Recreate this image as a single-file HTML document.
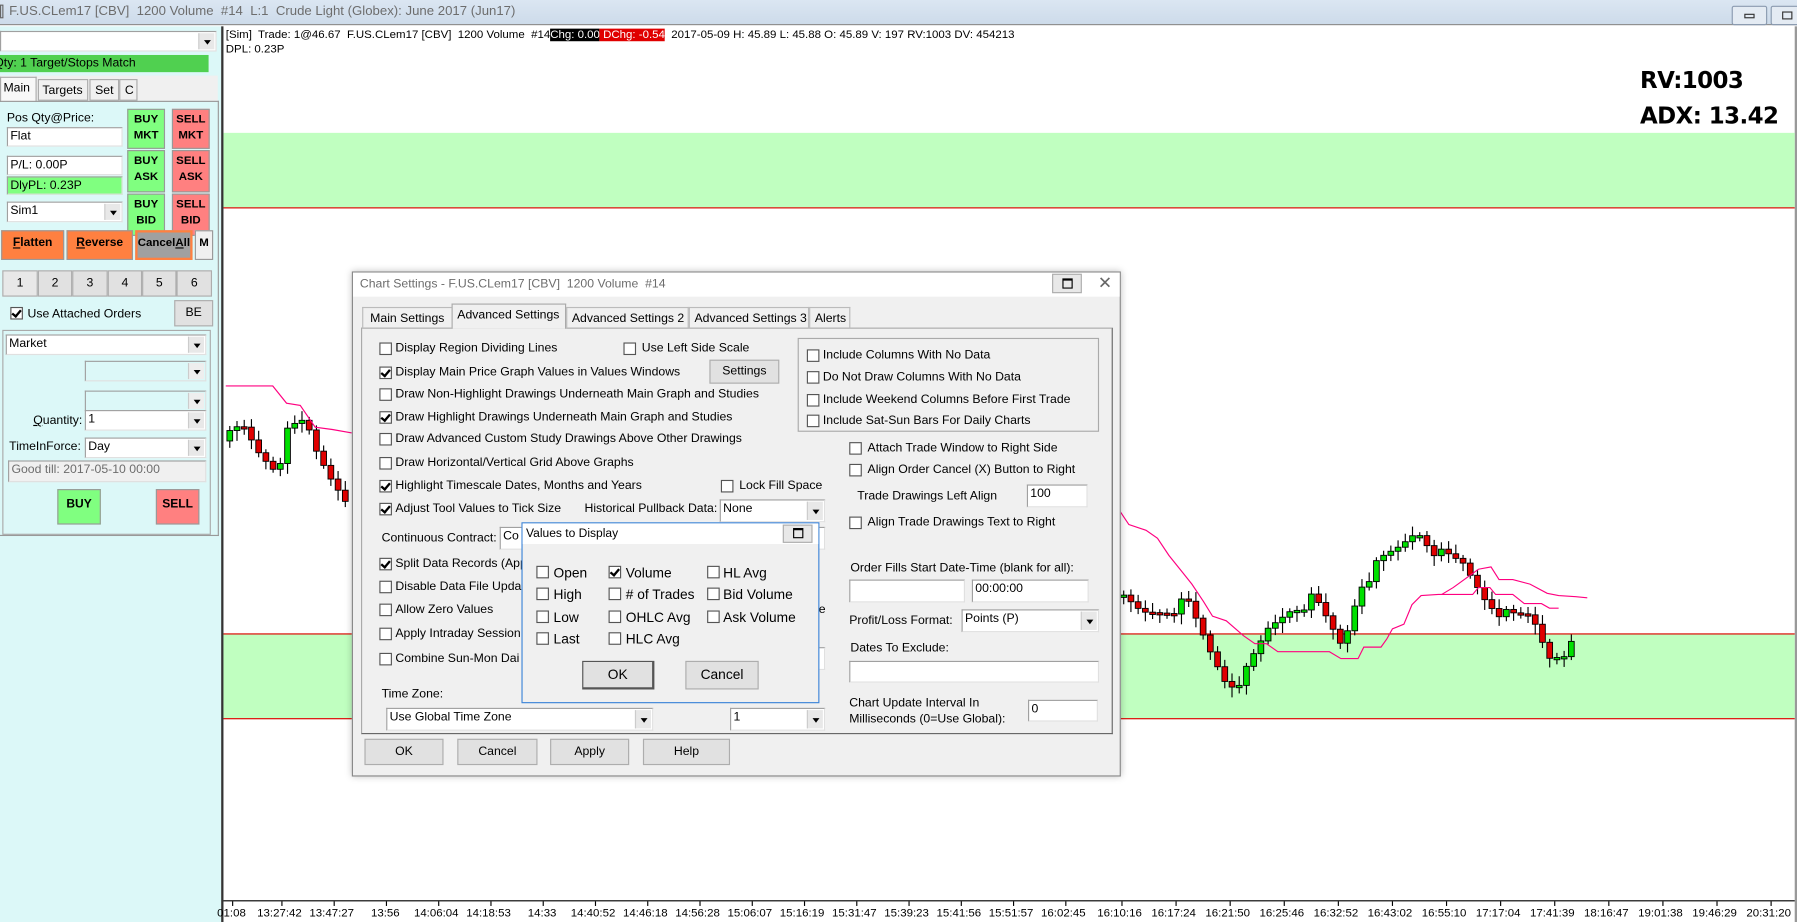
<!DOCTYPE html>
<html><head><meta charset="utf-8">
<style>
*{box-sizing:border-box;margin:0;padding:0}
html,body{width:1797px;height:922px;overflow:hidden;background:#fff}
#w{position:absolute;left:0;top:0;width:1568px;height:805px;transform:scale(1.14605,1.14534);transform-origin:0 0;font-family:"Liberation Sans",Arial,sans-serif;font-size:10.7px;color:#000}
.a{position:absolute;white-space:nowrap}
.box{position:absolute;background:#fff;border:1px solid #a0a0a0;border-right-color:#e0e0e0;border-bottom-color:#e0e0e0;padding:1px 2px;white-space:nowrap}
.btn{position:absolute;background:#e1e1e1;border:1px solid #adadad;text-align:center;white-space:nowrap}
.cb{position:absolute;width:11px;height:11px;background:#fff;border:1px solid #555}
.cb.k::after{content:"";position:absolute;left:2px;top:0px;width:3px;height:6px;border:solid #000;border-width:0 2px 2px 0;transform:rotate(40deg)}
.dd{position:absolute;right:1px;top:1px;bottom:1px;width:14px;background:#e8e8e8;border-left:1px solid #ccc}
.dd::after{content:"";position:absolute;left:4px;top:50%;margin-top:-1px;border:3px solid transparent;border-top:4px solid #000}
.gb{position:absolute;font-weight:bold;text-align:center;border:1px solid #999;font-size:10px;line-height:14px;padding-top:2px}
</style></head><body><div id="w">
<div class="a" style="left:0;top:0;width:1568px;height:22px;background:linear-gradient(#dbe6f2,#cddbea);border-bottom:1px solid #8a8a8a"></div>
<div class="a" style="left:0;top:4px;width:3px;height:12px;border:1px solid #666"></div>
<div class="a" style="left:8px;top:4px;color:#6d6d6d;font-size:11.5px">F.US.CLem17 [CBV]&nbsp; 1200 Volume&nbsp; #14&nbsp; L:1&nbsp; Crude Light (Globex): June 2017 (Jun17)</div>
<div class="a" style="left:1511px;top:5px;width:31px;height:17px;border:1px solid #8b9bb0;border-radius:2px;background:#e4ebf3"><div class="a" style="left:10px;top:6px;width:9px;height:4px;border:1px solid #333"></div></div>
<div class="a" style="left:1545px;top:5px;width:30px;height:17px;border:1px solid #8b9bb0;border-radius:2px;background:#e4ebf3"><div class="a" style="left:9px;top:4px;width:9px;height:7px;border:1px solid #333"></div></div>

<div class="a" style="left:0;top:23px;width:193px;height:782px;background:#dcf8f8"></div>
<div class="a" style="left:193px;top:23px;width:2px;height:782px;background:#333"></div>
<div class="box" style="left:0;top:27px;width:189px;height:18px"><div class="dd"></div></div>
<div class="a" style="left:0;top:48px;width:182px;height:15px;background:#50d050;overflow:hidden"><div class="a" style="left:-5px;top:1px">Qty: 1 Target/Stops Match</div></div>
<div class="a" style="left:0;top:66px;width:190px;height:22px;background:#f0f0f0"></div>
<div class="a" style="left:0;top:67px;width:32px;height:22px;background:#f8f8f8;border:1px solid #aaa;border-bottom:none;padding:3px 2px">Main</div>
<div class="a" style="left:33px;top:69px;width:44px;height:19px;background:#f0f0f0;border:1px solid #aaa;padding:3px 3px">Targets</div>
<div class="a" style="left:78px;top:69px;width:26px;height:19px;background:#f0f0f0;border:1px solid #aaa;padding:3px 4px">Set</div>
<div class="a" style="left:104px;top:69px;width:16px;height:19px;background:#f0f0f0;border:1px solid #aaa;padding:3px 4px">C</div>
<div class="a" style="left:0;top:88px;width:191px;height:380px;border:1px solid #999;border-left:none"></div>
<div class="a" style="left:6px;top:97px">Pos Qty@Price:</div>
<div class="box" style="left:6px;top:111px;width:101px;height:17px">Flat</div>
<div class="box" style="left:6px;top:136px;width:101px;height:17px">P/L: 0.00P</div>
<div class="box" style="left:6px;top:154px;width:101px;height:16px;background:#80ff80">DlyPL: 0.23P</div>
<div class="box" style="left:6px;top:176px;width:101px;height:18px">Sim1<div class="dd"></div></div>
<div class="gb" style="left:111px;top:95px;width:33px;height:35px;background:#80ff80">BUY<br>MKT</div>
<div class="gb" style="left:150px;top:95px;width:33px;height:35px;background:#ff8080">SELL<br>MKT</div>
<div class="gb" style="left:111px;top:131px;width:33px;height:37px;background:#80ff80">BUY<br>ASK</div>
<div class="gb" style="left:150px;top:131px;width:33px;height:37px;background:#ff8080">SELL<br>ASK</div>
<div class="gb" style="left:111px;top:169px;width:33px;height:37px;background:#80ff80">BUY<br>BID</div>
<div class="gb" style="left:150px;top:169px;width:33px;height:37px;background:#ff8080">SELL<br>BID</div>
<div class="gb" style="left:1px;top:201px;width:55px;height:26px;background:#ff8040;line-height:20px;padding:0;font-size:10.5px"><u>F</u>latten</div>
<div class="gb" style="left:58px;top:201px;width:58px;height:26px;background:#ff8040;line-height:20px;padding:0;font-size:10.5px"><u>R</u>everse</div>
<div class="gb" style="left:118px;top:201px;width:50px;height:26px;background:#a0a0a0;line-height:20px;padding:0;font-size:10px;border:2px solid #ff8040">Cancel<u>A</u>ll</div>
<div class="gb" style="left:170px;top:201px;width:16px;height:26px;background:#f0f0f0;line-height:22px;padding:0;font-size:10px">M</div>
<div class="btn" style="left:2px;top:236px;width:31px;height:23px;line-height:21px;background:#e8e8e8">1</div>
<div class="btn" style="left:33px;top:236px;width:30px;height:23px;line-height:21px">2</div>
<div class="btn" style="left:63px;top:236px;width:31px;height:23px;line-height:21px">3</div>
<div class="btn" style="left:94px;top:236px;width:30px;height:23px;line-height:21px">4</div>
<div class="btn" style="left:124px;top:236px;width:30px;height:23px;line-height:21px">5</div>
<div class="btn" style="left:154px;top:236px;width:31px;height:23px;line-height:21px">6</div>
<div class="cb k" style="left:9px;top:268px"></div>
<div class="a" style="left:24px;top:268px">Use Attached Orders</div>
<div class="btn" style="left:152px;top:262px;width:34px;height:23px;line-height:21px">BE</div>
<div class="a" style="left:2px;top:288px;width:182px;height:179px;border:1px solid #aaa"></div>
<div class="box" style="left:5px;top:292px;width:175px;height:18px">Market<div class="dd"></div></div>
<div class="box" style="left:74px;top:315px;width:106px;height:18px;background:#dcf8f8"><div class="dd" style="background:#eee"></div></div>
<div class="box" style="left:74px;top:341px;width:106px;height:18px;background:#dcf8f8"><div class="dd" style="background:#eee"></div></div>
<div class="a" style="left:29px;top:361px"><u>Q</u>uantity:</div>
<div class="box" style="left:74px;top:358px;width:106px;height:18px">1<div class="dd"></div></div>
<div class="a" style="left:8px;top:384px">TimeInForce:</div>
<div class="box" style="left:74px;top:382px;width:106px;height:18px">Day<div class="dd"></div></div>
<div class="box" style="left:7px;top:402px;width:173px;height:19px;background:#f0f0f0;color:#6d6d6d">Good till: 2017-05-10 00:00</div>
<div class="gb" style="left:50px;top:427px;width:38px;height:31px;background:#80ff80;line-height:25px;padding:0;font-size:10.5px">BUY</div>
<div class="gb" style="left:136px;top:427px;width:38px;height:31px;background:#ff8080;line-height:25px;padding:0;font-size:10.5px">SELL</div>

<div class="a" style="left:195px;top:23px;width:1371px;height:764px;background:#fff"></div>
<div class="a" style="left:1566px;top:23px;width:2px;height:782px;background:#999"></div>
<div class="a" style="left:195px;top:116px;width:1371px;height:66px;background:#c0ffc0;border-bottom:1px solid #e00000"></div>
<div class="a" style="left:195px;top:553px;width:1371px;height:75px;background:#c0ffc0;border-top:1px solid #e00000;border-bottom:1px solid #e00000"></div>
<svg class="a" id="cs" style="left:0;top:0" width="1568" height="805"></svg>
<div class="a" style="left:197px;top:25px;font-size:10px">[Sim]&nbsp; Trade: 1@46.67&nbsp; F.US.CLem17 [CBV]&nbsp; 1200 Volume&nbsp; #14<span style="background:#000;color:#fff">Chg: 0.00</span><span style="background:#e00000;color:#fff"> DChg: -0.54</span>&nbsp; 2017-05-09 H: 45.89 L: 45.88 O: 45.89 V: 197 RV:1003 DV: 454213</div>
<div class="a" style="left:197px;top:38px;font-size:10px">DPL: 0.23P</div>
<div class="a" style="left:1431px;top:58px;font-size:20px;font-weight:bold;font-family:'DejaVu Sans',sans-serif;letter-spacing:-0.5px">RV:1003</div>
<div class="a" style="left:1431px;top:89px;font-size:20px;font-weight:bold;font-family:'DejaVu Sans',sans-serif;letter-spacing:-0.5px">ADX: 13.42</div>
<div class="a" style="left:195px;top:786px;width:1371px;height:1px;background:#000"></div>
<div id="tl"></div>

<div class="a" style="left:307px;top:237px;width:671px;height:441px;background:#f0f0f0;border:1px solid #888;box-shadow:0 0 6px rgba(0,0,0,.25)"></div>
<div class="a" style="left:308px;top:238px;width:669px;height:21px;background:#fff"></div>
<div class="a" style="left:314px;top:242px;color:#6d6d6d">Chart Settings - F.US.CLem17 [CBV]&nbsp; 1200 Volume&nbsp; #14</div>
<div class="btn" style="left:918px;top:239px;width:26px;height:17px;background:#e8e8e8"><div class="a" style="left:8px;top:3px;width:9px;height:9px;border:1px solid #000;border-top-width:2px"></div></div>
<div class="a" style="left:958px;top:238px;font-size:15px;color:#666">✕</div>
<div class="a" style="left:315px;top:286px;width:656px;height:355px;border:1px solid #aaa;border-right-color:#666;border-bottom-color:#666"></div>
<div class="a" style="left:316px;top:268px;width:79px;height:19px;border:1px solid #bbb;border-bottom:none;padding:3px 6px">Main Settings</div>
<div class="a" style="left:394px;top:265px;width:100px;height:22px;border:1px solid #aaa;border-bottom:none;background:#f0f0f0;padding:3px 4px">Advanced Settings</div>
<div class="a" style="left:494px;top:268px;width:107px;height:19px;border:1px solid #bbb;border-bottom:none;padding:3px 4px">Advanced Settings 2</div>
<div class="a" style="left:601px;top:268px;width:105px;height:19px;border:1px solid #bbb;border-bottom:none;padding:3px 4px">Advanced Settings 3</div>
<div class="a" style="left:706px;top:268px;width:36px;height:19px;border:1px solid #bbb;border-bottom:none;padding:3px 4px">Alerts</div>

<div class="cb" style="left:331px;top:299px"></div><div class="a" style="left:345px;top:298px">Display Region Dividing Lines</div>
<div class="cb" style="left:544px;top:299px"></div><div class="a" style="left:560px;top:298px">Use Left Side Scale</div>
<div class="cb k" style="left:331px;top:320px"></div><div class="a" style="left:345px;top:319px">Display Main Price Graph Values in Values Windows</div>
<div class="btn" style="left:619px;top:314px;width:61px;height:21px;line-height:19px">Settings</div>
<div class="cb" style="left:331px;top:339px"></div><div class="a" style="left:345px;top:338px">Draw Non-Highlight Drawings Underneath Main Graph and Studies</div>
<div class="cb k" style="left:331px;top:359px"></div><div class="a" style="left:345px;top:358px">Draw Highlight Drawings Underneath Main Graph and Studies</div>
<div class="cb" style="left:331px;top:378px"></div><div class="a" style="left:345px;top:377px">Draw Advanced Custom Study Drawings Above Other Drawings</div>
<div class="cb" style="left:331px;top:399px"></div><div class="a" style="left:345px;top:398px">Draw Horizontal/Vertical Grid Above Graphs</div>
<div class="cb k" style="left:331px;top:419px"></div><div class="a" style="left:345px;top:418px">Highlight Timescale Dates, Months and Years</div>
<div class="cb" style="left:629px;top:419px"></div><div class="a" style="left:645px;top:418px">Lock Fill Space</div>
<div class="cb k" style="left:331px;top:439px"></div><div class="a" style="left:345px;top:438px">Adjust Tool Values to Tick Size</div>
<div class="a" style="left:510px;top:438px">Historical Pullback Data:</div>
<div class="box" style="left:628px;top:436px;width:92px;height:20px">None<div class="dd"></div></div>
<div class="a" style="left:333px;top:464px">Continuous Contract:</div>
<div class="box" style="left:436px;top:460px;width:284px;height:20px">Co</div>
<div class="cb k" style="left:331px;top:487px"></div><div class="a" style="left:345px;top:486px">Split Data Records (App</div>
<div class="cb" style="left:331px;top:507px"></div><div class="a" style="left:345px;top:506px">Disable Data File Upda</div>
<div class="cb" style="left:331px;top:527px"></div><div class="a" style="left:345px;top:526px">Allow Zero Values</div>
<div class="cb" style="left:331px;top:548px"></div><div class="a" style="left:345px;top:547px">Apply Intraday Session</div>
<div class="cb" style="left:331px;top:570px"></div><div class="a" style="left:345px;top:569px">Combine Sun-Mon Dai</div>
<div class="a" style="left:712px;top:526px">le</div>
<div class="box" style="left:600px;top:565px;width:120px;height:20px"></div>
<div class="a" style="left:333px;top:600px">Time Zone:</div>
<div class="box" style="left:337px;top:618px;width:233px;height:20px">Use Global Time Zone<div class="dd"></div></div>
<div class="box" style="left:637px;top:618px;width:83px;height:20px">1<div class="dd"></div></div>

<div class="a" style="left:696px;top:295px;width:263px;height:82px;border:1px solid #aaa"></div>
<div class="cb" style="left:704px;top:305px"></div><div class="a" style="left:718px;top:304px">Include Columns With No Data</div>
<div class="cb" style="left:704px;top:324px"></div><div class="a" style="left:718px;top:323px">Do Not Draw Columns With No Data</div>
<div class="cb" style="left:704px;top:344px"></div><div class="a" style="left:718px;top:343px">Include Weekend Columns Before First Trade</div>
<div class="cb" style="left:704px;top:362px"></div><div class="a" style="left:718px;top:361px">Include Sat-Sun Bars For Daily Charts</div>
<div class="cb" style="left:741px;top:386px"></div><div class="a" style="left:757px;top:385px">Attach Trade Window to Right Side</div>
<div class="cb" style="left:741px;top:405px"></div><div class="a" style="left:757px;top:404px">Align Order Cancel (X) Button to Right</div>
<div class="a" style="left:748px;top:427px">Trade Drawings Left Align</div>
<div class="box" style="left:896px;top:423px;width:53px;height:20px">100</div>
<div class="cb" style="left:741px;top:451px"></div><div class="a" style="left:757px;top:450px">Align Trade Drawings Text to Right</div>
<div class="a" style="left:742px;top:490px">Order Fills Start Date-Time (blank for all):</div>
<div class="box" style="left:741px;top:506px;width:101px;height:20px"></div>
<div class="box" style="left:848px;top:506px;width:102px;height:20px">00:00:00</div>
<div class="a" style="left:741px;top:536px">Profit/Loss Format:</div>
<div class="box" style="left:839px;top:532px;width:120px;height:20px">Points (P)<div class="dd"></div></div>
<div class="a" style="left:742px;top:560px">Dates To Exclude:</div>
<div class="box" style="left:741px;top:577px;width:218px;height:19px"></div>
<div class="a" style="left:741px;top:607px;line-height:14px">Chart Update Interval In<br>Milliseconds (0=Use Global):</div>
<div class="box" style="left:897px;top:611px;width:61px;height:19px">0</div>
<div class="btn" style="left:318px;top:645px;width:69px;height:23px;line-height:21px">OK</div>
<div class="btn" style="left:399px;top:645px;width:70px;height:23px;line-height:21px">Cancel</div>
<div class="btn" style="left:480px;top:645px;width:69px;height:23px;line-height:21px">Apply</div>
<div class="btn" style="left:561px;top:645px;width:76px;height:23px;line-height:21px">Help</div>

<div class="a" style="left:455px;top:456px;width:260px;height:158px;background:#f0f0f0;border:1px solid #3c84d8"></div>
<div class="a" style="left:456px;top:457px;width:258px;height:18px;background:#fff"></div>
<div class="a" style="left:459px;top:460px;font-size:10.5px">Values to Display</div>
<div class="btn" style="left:683px;top:458px;width:26px;height:16px;background:#e8e8e8"><div class="a" style="left:8px;top:2px;width:9px;height:9px;border:1px solid #000;border-top-width:2px"></div></div>
<div class="cb" style="left:468px;top:494px"></div><div class="a" style="left:483px;top:493px;font-size:12px">Open</div>
<div class="cb" style="left:468px;top:513px"></div><div class="a" style="left:483px;top:512px;font-size:12px">High</div>
<div class="cb" style="left:468px;top:533px"></div><div class="a" style="left:483px;top:532px;font-size:12px">Low</div>
<div class="cb" style="left:468px;top:552px"></div><div class="a" style="left:483px;top:551px;font-size:12px">Last</div>
<div class="cb k" style="left:531px;top:494px"></div><div class="a" style="left:546px;top:493px;font-size:12px">Volume</div>
<div class="cb" style="left:531px;top:513px"></div><div class="a" style="left:546px;top:512px;font-size:12px"># of Trades</div>
<div class="cb" style="left:531px;top:533px"></div><div class="a" style="left:546px;top:532px;font-size:12px">OHLC Avg</div>
<div class="cb" style="left:531px;top:552px"></div><div class="a" style="left:546px;top:551px;font-size:12px">HLC Avg</div>
<div class="cb" style="left:617px;top:494px"></div><div class="a" style="left:631px;top:493px;font-size:12px">HL Avg</div>
<div class="cb" style="left:617px;top:513px"></div><div class="a" style="left:631px;top:512px;font-size:12px">Bid Volume</div>
<div class="cb" style="left:617px;top:533px"></div><div class="a" style="left:631px;top:532px;font-size:12px">Ask Volume</div>
<div class="btn" style="left:508px;top:577px;width:63px;height:25px;line-height:22px;font-size:12px;border:1px solid #555;border-right-width:2px;border-bottom-width:2px">OK</div>
<div class="btn" style="left:598px;top:577px;width:64px;height:25px;line-height:23px;font-size:12px">Cancel</div>
</div>
<script>
var ns="http://www.w3.org/2000/svg",s=document.getElementById("cs");
function el(t,a){var e=document.createElementNS(ns,t);for(var k in a)e.setAttribute(k,a[k]);s.appendChild(e);return e}
function interp(k,x){for(var i=0;i<k.length-1;i++){if(x>=k[i][0]&&x<=k[i+1][0]){var t=(x-k[i][0])/(k[i+1][0]-k[i][0]);return k[i][1]+t*(k[i+1][1]-k[i][1])}}return k[k.length-1][1]}
function candles(k,x0,x1){var prev=interp(k,x0),n=0;for(var x=x0;x<=x1;x+=6.3){n++;var c=interp(k,x+6)+((n*37)%9-4)*1.5;var o=prev;var top=Math.min(o,c),bot=Math.max(o,c);if(bot-top<2)bot=top+2;var hi=top-3-(n*13)%6,lo=bot+3+(n*17)%7;el("line",{x1:x+2.5,x2:x+2.5,y1:hi,y2:lo,stroke:"#000","stroke-width":1});el("rect",{x:x,y:top,width:5,height:bot-top,fill:c<o?"#00e000":"#e00000",stroke:"#000","stroke-width":0.8});prev=c}}
candles([[198,385],[215,372],[230,395],[245,408],[255,378],[270,368],[280,395],[292,415],[305,432]],198,302);
candles([[978,520],[1000,535],[1040,528],[1060,570],[1075,597],[1090,590],[1110,550],[1130,530],[1150,524],[1165,548],[1175,565],[1190,510],[1210,490],[1225,478],[1240,462],[1260,485],[1280,493],[1300,522],[1320,540],[1340,538],[1355,572],[1372,566]],978,1372);
function pl(p){el("polyline",{points:p.map(function(q){return q.join(",")}).join(" "),fill:"none",stroke:"#ff0080","stroke-width":1})}
pl([[197,337],[238,337],[250,352],[262,354],[275,373],[290,375],[307,378]]);
pl([[977,446],[985,458],[1000,463],[1010,470],[1020,485],[1032,500],[1040,510],[1050,525],[1058,538],[1070,542],[1085,555],[1095,562],[1105,562],[1115,569],[1160,569],[1170,575],[1185,575],[1190,565],[1205,565],[1210,558],[1215,549],[1225,545],[1232,528],[1240,520],[1255,519],[1285,519],[1290,513],[1300,513],[1305,519],[1320,519],[1330,527],[1345,527],[1352,531],[1360,531]]);
pl([[1258,519],[1268,513],[1290,497],[1301,495],[1308,506],[1320,506],[1335,510],[1350,518],[1360,520],[1375,521],[1385,522]]);
var tl=document.getElementById("tl"),L=["01:08","13:27:42","13:47:27","13:56","14:06:04","14:18:53","14:33","14:40:52","14:46:18","14:56:28","15:06:07","15:16:19","15:31:47","15:39:23","15:41:56","15:51:57","16:02:45"];
var R=["16:10:16","16:17:24","16:21:50","16:25:46","16:32:52","16:43:02","16:55:10","17:17:04","17:41:39","18:16:47","19:01:38","19:46:29","20:31:20"];
function lab(t,x){var d=document.createElement("div");d.className="a";d.style.left=(x-(t.length*2.7))+"px";d.style.top="792px";d.style.fontSize="10px";d.textContent=t;document.getElementById("w").appendChild(d);el("line",{x1:x,x2:x,y1:787,y2:791,stroke:"#000"})}
lab(L[0],203);for(var i=1;i<17;i++)lab(L[i],246+(i-1)*45.6);
for(var j=0;j<R.length;j++)lab(R[j],979+j*47.2);
</script>
</body></html>
